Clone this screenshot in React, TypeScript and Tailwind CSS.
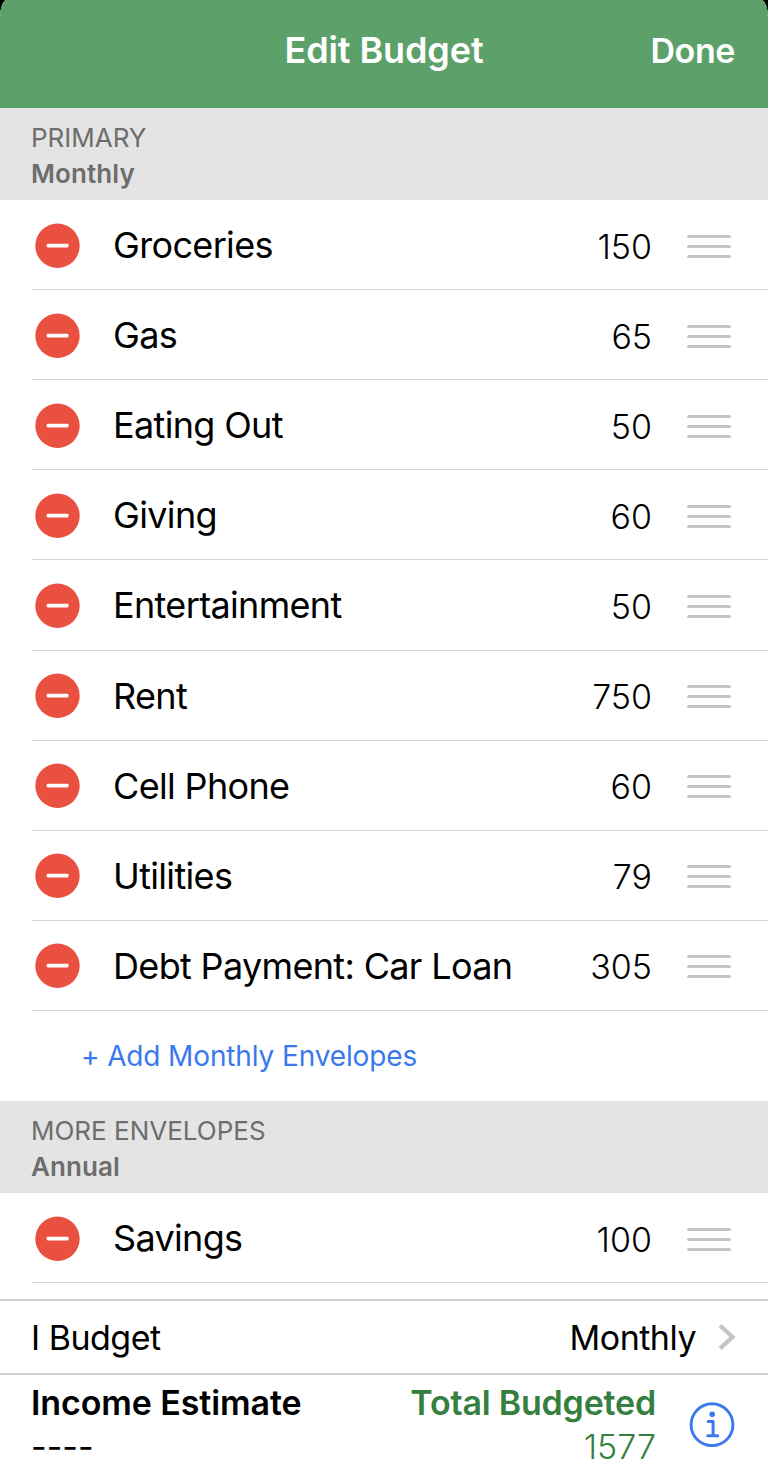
type Envelope = {
  name: string;
  amount: number;
};

const primaryEnvelopes: Envelope[] = [
  { name: "Groceries", amount: 150 },
  { name: "Gas", amount: 65 },
  { name: "Eating Out", amount: 50 },
  { name: "Giving", amount: 60 },
  { name: "Entertainment", amount: 50 },
  { name: "Rent", amount: 750 },
  { name: "Cell Phone", amount: 60 },
  { name: "Utilities", amount: 79 },
  { name: "Debt Payment: Car Loan", amount: 305 },
];

const annualEnvelopes: Envelope[] = [{ name: "Savings", amount: 100 }];

function SectionHeader({ title, period }: { title: string; period: string }) {
  return (
    <div className="h-[92px] bg-[#e4e4e4] pt-3 pl-[31px] text-[26px] leading-9 text-[#6d6d6d]">
      <p>{title}</p>
      <p className="font-semibold tracking-[0.1px]">{period}</p>
    </div>
  );
}

function RemoveIcon() {
  return (
    <svg width="45" height="45" viewBox="0 0 45 45" aria-hidden>
      <circle cx="22.5" cy="22.7" r="22.2" fill="#e9503f" />
      <rect x="11.6" y="20.8" width="22" height="3.6" rx="1.4" fill="#fff" />
    </svg>
  );
}

function EnvelopeRow({ name, amount }: Envelope) {
  return (
    <li className="relative flex h-[90.11px] items-center pr-[37px] pl-[35px]">
      <button type="button" aria-label={`Remove ${name}`} className="size-[45px] shrink-0">
        <RemoveIcon />
      </button>
      <span className="ml-[33px] flex-1 text-[36px] tracking-[-0.66px]">{name}</span>
      <span className="pt-0.5 text-[34px] font-light">{amount}</span>
      <span className="mt-0.5 ml-[35px] flex w-11 flex-col gap-[7px]" aria-hidden>
        <span className="h-[3px] rounded-full bg-[#c5c5c5]" />
        <span className="h-[3px] rounded-full bg-[#c5c5c5]" />
        <span className="h-[3px] rounded-full bg-[#c5c5c5]" />
      </span>
      <span className="absolute right-0 bottom-0 left-8 h-px bg-[#d3d3d5]" />
    </li>
  );
}

function InfoIcon() {
  return (
    <svg width="46" height="46" viewBox="0 0 46 46" fill="none" stroke="#3b78ee" aria-hidden>
      <circle cx="23" cy="22.7" r="20.9" strokeWidth="2.9" />
      <circle cx="23.2" cy="12.2" r="2.8" fill="#3b78ee" stroke="none" />
      <path d="M19.2 19.4h4.9v14.2M18.8 33.7h10" strokeWidth="3" strokeLinecap="round" strokeLinejoin="round" />
    </svg>
  );
}

export default function App() {
  return (
    <div className="h-[1483px] w-[768px] overflow-hidden bg-black font-['Inter',sans-serif] text-black">
      <div className="flex h-full flex-col overflow-hidden bg-white [border-radius:7px_7px_0_0/17px_17px_0_0]">
        <header className="grid h-[108px] shrink-0 grid-cols-[1fr_auto_1fr] items-start bg-[#5ba169] px-8 pt-7 text-white">
          <h1 className="col-start-2 text-[36px] leading-[44px] font-semibold tracking-[-0.1px]">Edit Budget</h1>
          <button type="button" className="mr-px justify-self-end text-[34px] leading-[46px] font-semibold tracking-[-0.4px]">
            Done
          </button>
        </header>

        <main className="h-[1191px] shrink-0 overflow-hidden">
          <SectionHeader title="PRIMARY" period="Monthly" />
          <ul>
            {primaryEnvelopes.map((envelope) => (
              <EnvelopeRow key={envelope.name} {...envelope} />
            ))}
          </ul>
          <button type="button" className="flex h-[90px] w-full items-center pl-[81px] text-[28px] tracking-[-0.13px] text-[#3b78ee]">
            + Add Monthly Envelopes
          </button>
          <SectionHeader title="MORE ENVELOPES" period="Annual" />
          <ul>
            {annualEnvelopes.map((envelope) => (
              <EnvelopeRow key={envelope.name} {...envelope} />
            ))}
          </ul>
        </main>

        <footer className="flex-1">
          <div className="flex h-[74px] items-center border-t-2 border-[#d1d1d6] pr-8 pl-[31px] text-[34px] tracking-[-0.5px]">
            <span className="flex-1">I Budget</span>
            <span>Monthly</span>
            <svg width="18" height="28" viewBox="0 0 18 28" fill="none" className="ml-[22px]" aria-hidden>
              <path d="M2 2.5 14.5 14 2 25.5" stroke="#c5c5c8" strokeWidth="4.4" />
            </svg>
          </div>
          <div className="flex border-t-2 border-[#d1d1d6] pr-[33px] pl-[31px] text-[34px] leading-[44px]">
            <div className="flex-1 pt-1.5">
              <p className="font-semibold tracking-[-0.1px]">Income Estimate</p>
              <p>----</p>
            </div>
            <div className="pt-1.5 text-right text-[#35803f]">
              <p className="font-semibold tracking-[-0.2px]">Total Budgeted</p>
              <p className="font-[260]">1577</p>
            </div>
            <button type="button" aria-label="Budget info" className="mt-[27px] ml-[33px] size-[46px]">
              <InfoIcon />
            </button>
          </div>
        </footer>
      </div>
    </div>
  );
}
